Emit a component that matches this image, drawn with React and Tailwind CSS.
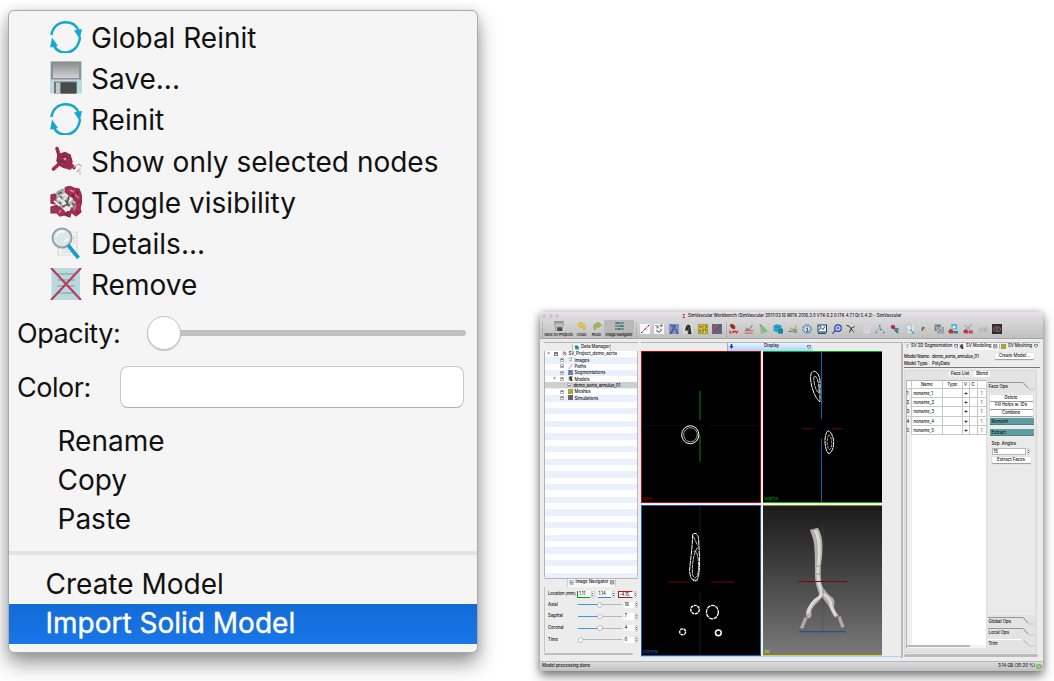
import React from "react";

/* ---------- menu icons ---------- */
function RefreshIcon() {
  return (
    <svg viewBox="0 0 32 32" className="size-8 shrink-0" fill="none" stroke="#12a8cf" strokeWidth="2.5">
      <path d="M1.500 14C2.500 6 8.500 1.300 15.500 1.300C22.500 1.300 27 5.500 28.800 10" />
      <path d="M30 16C29 26 22.500 31.500 15.500 31.500C9 31.500 4.800 28 2.500 22" />
      <path d="M24 9.500L32 8L29.800 18Z" fill="#12a8cf" stroke="none" />
      <path d="M.2 26.500L2 16.500L8 25Z" fill="#12a8cf" stroke="none" />
    </svg>
  );
}
function FloppyIcon({ className }) {
  return (
    <svg viewBox="0 0 32 32" className={className}>
      <defs>
        <linearGradient id="flp" x1="0" y1="0" x2="0" y2="1">
          <stop offset="0" stopColor="#8d8d8d" />
          <stop offset="1" stopColor="#d2d2d2" />
        </linearGradient>
      </defs>
      <rect x="0" y="0" width="32" height="32" fill="#b9dade" />
      <rect x="1" y="0" width="30" height="18" fill="#8c9292" />
      <rect x="3" y="1" width="26" height="15.500" fill="url(#flp)" />
      <rect x="4" y="20" width="23" height="12" fill="#6f7777" />
      <rect x="6" y="21" width="4" height="11" fill="#c6c9c9" />
      <rect x="11" y="21" width="15" height="11" fill="#484b4c" />
    </svg>
  );
}
function NodeIcon() {
  return (
    <svg viewBox="0 0 32 32" className="size-8 shrink-0" fill="none" strokeLinecap="round">
      <path d="M7 3.500L9 10M9 19L3.500 24M19 18L24 22.500M13 21L20 23" stroke="#a02c4f" strokeWidth="3.600" />
      <path d="M8 10L15 7.500L20 10L22 17L18 21L11 21L7 16Z" fill="#a52d50" stroke="#8b2846" strokeWidth="1.500" />
      <path d="M11 12L15 10.500L18 13M12 16L16 18M9 15L11 17" stroke="#5d3144" strokeWidth="1.400" />
      <circle cx="15" cy="14" r="1.300" fill="#d795a8" />
      <path d="M24 22L29 19L31 21M27 27L30 24M30 27V29" stroke="#c9a9b1" strokeWidth="1.200" />
    </svg>
  );
}
function NodesIcon() {
  return (
    <svg viewBox="0 0 32 32" className="size-8 shrink-0" fill="none">
      <path d="M1 9L5 8L7 14L5 18L1 17ZM15 2L19 0L24 2L29 3L31 8L32 14L26 16L21 11L16 8ZM1 21L8 19L14 25L21 26L20 31L14 29L10 30L7 27L1 27ZM24 18L32 15L30 22L31 26L26 30L20 25Z" fill="#a92f52" stroke="#8c2d49" strokeWidth="1.200" />
      <path d="M7 6L13 3L18 11L26 16L23 22L13 21L6 16Z" fill="#b9b9b9" stroke="#8a8a8a" />
      <path d="M8 13L16 17L22 13L15 8ZM15 17L16 25L22 19M4 15L10 20M16 10L13 18L20 24" stroke="#ececec" strokeWidth="1.700" />
      <path d="M10 10L12 12M15 14L18 18L12 21M19 10L17 18L20 20M22 17L26 21M5 22L8 24M8 8L12 6M9 16L11 18" stroke="#555" strokeWidth="1.500" />
      <path d="M20 4L24 6M25 9L29 12M26 19L24 24M9 27L11 24" stroke="#d77f97" strokeWidth="1.500" />
      <path d="M22 8L24 11M27 5L28 8M15 27L18 29M27 25L28 27" stroke="#5d2037" strokeWidth="1.500" />
    </svg>
  );
}
function MagnifierIcon({ className }) {
  return (
    <svg viewBox="0 0 32 32" className={className} fill="none">
      <path d="M8 5H27V28H8Z" fill="#f1f2f2" stroke="#cfcfcf" strokeWidth="1.200" strokeDasharray="2 1" />
      <path d="M12 25H22M12 22H19M24 9V17" stroke="#d0d0d0" />
      <circle cx="12" cy="11" r="9.500" fill="#d9e4e7" fillOpacity=".85" stroke="#8ea4aa" strokeWidth="2" />
      <path d="M6 10C7 6 10 4 14 5M14 15L18 12" stroke="#fff" strokeWidth="1.500" />
      <path d="M18 18L28.500 31" stroke="#169ec1" strokeWidth="3.600" />
    </svg>
  );
}
function RemoveIcon() {
  return (
    <svg viewBox="0 0 32 32" className="size-8 shrink-0" fill="none">
      <rect x="1.500" y="0" width="28.500" height="32" fill="#b8dade" />
      <path d="M7 6H25M7 12H25M7 18H25M7 25H25" stroke="#98bac0" strokeWidth="2" />
      <path d="M1 0L31 32M31 0L1 32" stroke="#bd3b5d" strokeWidth="2.200" />
    </svg>
  );
}

function MenuRow({ icon, children }) {
  return (
    <div className="flex h-[41.3px] items-center gap-[9px] pl-[41px]">
      {icon}
      <span className="pt-[2px]">{children}</span>
    </div>
  );
}

function ContextMenu() {
  return (
    <div className="mt-[10px] ml-[8px] flex h-[643px] w-[470px] shrink-0 flex-col overflow-hidden rounded-[6px] border border-[#a9a9a9] bg-[#f5f5f5] font-['Inter',sans-serif] text-[28px] leading-none whitespace-nowrap text-[#111] shadow-[0_11px_20px_rgba(0,0,0,0.38),0_2px_12px_rgba(0,0,0,0.14)]">
      <div className="flex flex-col pt-[5px]">
        <MenuRow icon={<RefreshIcon />}>Global Reinit</MenuRow>
        <MenuRow icon={<FloppyIcon className="h-[33px] w-8 shrink-0" />}>Save...</MenuRow>
        <MenuRow icon={<RefreshIcon />}>Reinit</MenuRow>
        <MenuRow icon={<NodeIcon />}>Show only selected nodes</MenuRow>
        <MenuRow icon={<NodesIcon />}>Toggle visibility</MenuRow>
        <MenuRow icon={<MagnifierIcon className="size-8 shrink-0" />}>Details...</MenuRow>
        <MenuRow icon={<RemoveIcon />}>Remove</MenuRow>
      </div>
      <div className="mt-[10px] flex h-[36px] items-center pl-[8px]">
        <span className="w-[130px] text-[27px] tracking-[-0.45px]">Opacity:</span>
        <div className="z-10 size-[34px] shrink-0 rounded-full border border-[#c3c3c3] bg-white shadow-[0_1px_1px_rgba(0,0,0,0.2)]" />
        <div className="-ml-[2px] h-[6px] w-[287px] rounded-r-full bg-[#c0c0c0]" />
      </div>
      <div className="mt-[15px] flex h-[42px] items-center pl-[8px]">
        <span className="w-[103px] text-[27px] tracking-[-0.45px]">Color:</span>
        <div className="h-[42px] w-[344px] rounded-[8px] border border-[#c9c9c9] border-b-[#b0b0b0] bg-white" />
      </div>
      <div className="mt-[14px] flex flex-col pl-[48.500px]">
        <span className="h-[39px] leading-[39px]">Rename</span>
        <span className="h-[39px] leading-[39px]">Copy</span>
        <span className="h-[39px] leading-[39px]">Paste</span>
      </div>
      <div className="mt-[12px] h-[4px] shrink-0 bg-[#e3e3e3]" />
      <div className="mt-[10px] h-[39px] shrink-0 pl-[36.500px] leading-[38px]">Create Model</div>
      <div className="h-[40px] shrink-0 bg-linear-to-b from-[#136bd6] to-[#1976e8] pl-[36.500px] leading-[38px] text-white [-webkit-text-stroke:0.4px_white]">Import Solid Model</div>
    </div>
  );
}

/* ---------- tool bar ---------- */
function Glyph({ children, w = "size-[10px]" }) {
  return (
    <svg viewBox="0 0 20 20" className={w + " shrink-0"} fill="none">
      {children}
    </svg>
  );
}
const pathGlyph = (
  <Glyph>
    <rect width="20" height="20" fill="#fafafa" />
    <path d="M3 18L8 12L14 7L18 2" stroke="#b154ae" strokeWidth="2" />
    <path d="M2 16L4 18M16 2L18 4" stroke="#111" strokeWidth="2" />
    <path d="M9 10L12 10" stroke="#d55" strokeWidth="3" />
  </Glyph>
);
const segGlyph = (
  <Glyph>
    <rect width="20" height="20" fill="#f7f7f7" />
    <path d="M3 3L8 5L6 9M11 3L17 2L14 6M5 12L8 17M12 10L15 12L11 17L8 13" stroke="#444" strokeWidth="1.600" />
    <path d="M4 7H16M8 2L14 16" stroke="#999" strokeWidth="1" strokeDasharray="2 2" />
  </Glyph>
);
const vesselGlyph = (
  <Glyph>
    <rect width="20" height="20" fill="#8090cb" />
    <path d="M5 1L9 9L3 20M8 8L14 12L17 20M9 9L13 2" stroke="#3c4d80" strokeWidth="3" />
    <path d="M7 5L10 10L15 17" stroke="#aebff0" />
  </Glyph>
);
const modelGlyph = (
  <Glyph>
    <rect width="20" height="20" fill="#d8d8d8" />
    <path d="M6 5C8 0 16 0 15 7L17 20H10L9 12L4 14Z" fill="#252525" />
    <path d="M9 4L12 11L11 18" stroke="#777" strokeWidth="1.500" />
  </Glyph>
);
const meshGlyph = (
  <Glyph>
    <rect width="20" height="20" fill="#aa9a35" />
    <path d="M2 4L7 2L11 6L17 3M1 10L6 8L12 12L19 8M3 18L8 14L14 18L18 14M7 2L6 8L8 14M13 4L12 12L14 18" stroke="#e3d660" strokeWidth="1.500" />
    <path d="M4 6L9 5M14 9L16 13M3 13L6 16M9 10L11 15M15 5L18 6" stroke="#685713" strokeWidth="1.700" />
  </Glyph>
);
const simGlyph = (
  <Glyph>
    <rect width="20" height="20" fill="#5c6680" />
    <path d="M0 12C4 9 7 1 18 1L20 4C11 6 9 18 2 20Z" fill="#a55863" />
    <path d="M3 16C9 12 10 5 18 2" stroke="#303d69" strokeWidth="2" />
  </Glyph>
);
const toolsB = [
  <Glyph key="0"><path d="M2 2L7 0L12 5L11 10L5 8Z" fill="#c62020" stroke="#222" /><path d="M2 13V18H5M8 13V18M12 13L15 18L18 13M10 18V14" stroke="#d12020" strokeWidth="2.200" /></Glyph>,
  <Glyph key="1"><path d="M1 13H19M1 18H17" stroke="#c76c76" strokeWidth="2.500" /><path d="M3 8L9 13L17 2M4 10H9" stroke="#666" strokeWidth="1.800" /></Glyph>,
  <Glyph key="2"><path d="M2 3L10 6L19 16L11 17L4 20Z" fill="#84c680" /><path d="M1 1L7 5" stroke="#b35b38" strokeWidth="2" /><path d="M9 9L13 14" stroke="#448a4f" /></Glyph>,
  <Glyph key="3"><path d="M1 3L8 0L17 3V13L9 17L1 14Z" fill="#27a7c6" /><path d="M10 10L20 9V19L11 20Z" fill="#1686a5" /><path d="M2 5L9 7L15 4" stroke="#176b83" /></Glyph>,
  <Glyph key="4"><path d="M2 17L7 8L11 13L17 3" stroke="#d9925a" strokeWidth="2.500" /><path d="M11 10H18V18H11Z" fill="#73ab74" /><path d="M1 15H10" stroke="#5a89b8" strokeWidth="2" /></Glyph>,
  <Glyph key="5"><circle cx="10" cy="10" r="8" fill="#dfeaf5" stroke="#5f83ac" strokeWidth="3" strokeDasharray="4 1.300" /><circle cx="10" cy="10" r="5.500" stroke="#7e9fc4" /><path d="M10 5V7M8 9H11V14M8 14.500H13" stroke="#2a66a8" strokeWidth="2" /></Glyph>,
  <Glyph key="6"><rect x="2" y="2" width="17" height="14" fill="#eaf3fa" stroke="#233c55" strokeWidth="2" /><path d="M4 12L8 7L12 11L16 5M2 19H18M5 5H8" stroke="#214e7c" strokeWidth="2" /></Glyph>,
  <Glyph key="7"><circle cx="12" cy="8" r="6.500" fill="#ddecff" stroke="#2c3e9e" strokeWidth="2.500" /><path d="M7 13L1 19M9 8H15M12 5V11" stroke="#2846b9" strokeWidth="2.200" /></Glyph>,
  <Glyph key="8"><path d="M1 3L6 4L10 9L7 17M10 9L17 5M10 10L15 15" stroke="#303030" strokeWidth="2" /><path d="M14 16H19" stroke="#888" strokeWidth="2" strokeDasharray="1.500 1" /></Glyph>,
  <Glyph key="9"><path d="M4 2H18V19H4Z" fill="#dedede" stroke="#c0c0c0" /><path d="M7 6H15M7 10H15M7 14H15" stroke="#b9b9b9" strokeWidth="1.500" /></Glyph>,
  <Glyph key="10"><path d="M2 16L7 9L9 3L12 10L18 16M7 9H12" stroke="#7eb4ba" strokeWidth="1.800" /><path d="M1 17H4M16 17H19M8 3H11M10 11H13" stroke="#427c87" strokeWidth="2.500" /></Glyph>,
  <Glyph key="11"><circle cx="6" cy="6" r="4.500" fill="#c63a50" /><path d="M9 7L18 9L15 17L8 14Z" fill="#348f9a" /><path d="M3 4L9 9M12 15L17 18" stroke="#7e2440" strokeWidth="2" /></Glyph>,
  <MagnifierIcon key="12" className="size-[10px] shrink-0" />,
  <Glyph key="13"><path d="M6 8C6 4 12 5 12 9L8 10V14H5V9Z" fill="#3e75a9" /><path d="M14 9C15 14 12 16 8 14L9 11H13Z" fill="#e8c83d" /></Glyph>,
  <Glyph key="14"><path d="M1 1H14V14H1Z" fill="#71828a" /><path d="M6 6H20V19H6Z" fill="#8aa6ab" /><path d="M3 4L16 17M15 5L5 15M4 10H16" stroke="#d5d5d5" strokeWidth="1.500" /><path d="M8 8L13 13" stroke="#a24865" strokeWidth="2" /></Glyph>,
  <Glyph key="15"><path d="M6 0H18L18 11H8Z" fill="#4bb4d6" /><path d="M0 15L5 9L10 13L11 19H3Z" fill="#c82c3c" /><path d="M10 14H20V19H12Z" fill="#3577a1" /><circle cx="12" cy="6" r="3" fill="#e8f6fb" /></Glyph>,
  <Glyph key="16"><path d="M3 2L16 13M17 1L5 12" stroke="#9ab0b6" strokeWidth="2.500" /><path d="M0 15L5 10L10 13L11 19H3Z" fill="#c8344b" /><path d="M11 13H20V19H12Z" fill="#c14f62" /></Glyph>,
  <Glyph key="17"><path d="M3 9V16M8 6V16M13 8V16M17 5V16" stroke="#b0b0b0" strokeWidth="3" /></Glyph>,
  <Glyph key="18"><rect width="20" height="20" fill="#302e31" /><path d="M3 13C3 5 7 4 10 7C15 4 18 7 17 13M5 14H16M10 7V12" stroke="#8f7780" strokeWidth="2" /><path d="M4 9L8 10M12 9H16" stroke="#a74051" strokeWidth="1.500" /></Glyph>,
];

function Grip() {
  return <div className="h-[15px] w-0 shrink-0 border-l border-dotted border-[#9a9a9a]" />;
}
function ToolButton({ label, icon, className }) {
  return (
    <div className={"flex h-full shrink-0 flex-col items-center justify-between pt-[1px] pb-[1.500px] text-[3.800px] leading-[5px] " + className}>
      {icon}
      <span>{label}</span>
    </div>
  );
}
function Toolbar() {
  return (
    <div className="flex h-[19px] shrink-0 items-center border-b border-[#a5a5a5] bg-linear-to-b from-[#d8d8d8] to-[#c0c0c0] pl-[2px]">
      <Grip />
      <ToolButton className="w-[31px] tracking-[-0.15px]" label="Save SV Projects" icon={<FloppyIcon className="size-[10px]" />} />
      <ToolButton className="w-[15px]" label="Undo" icon={<Glyph><path d="M1 8L8 2V5C16 5 19 10 14 18C14 13 12 11 8 11V14Z" fill="#edcb35" stroke="#b99b27" /></Glyph>} />
      <ToolButton className="w-[15px]" label="Redo" icon={<Glyph><path d="M19 8L12 2V5C4 5 1 10 6 18C6 13 8 11 12 11V14Z" fill="#a3bd48" stroke="#748b37" /></Glyph>} />
      <ToolButton className="w-[30px] bg-[#b9b9b9] tracking-[-0.2px]" label="Image Navigator" icon={<Glyph w="h-[10px] w-[11px]"><path d="M1 4H19M1 10H19M1 16H19" stroke="#35616e" strokeWidth="2" /><path d="M6 2V6M14 8V12M9 14V18" stroke="#177e9b" strokeWidth="3.500" /></Glyph>} />
      <div className="w-[2px]" />
      <Grip />
      <div className="ml-[2.500px] flex gap-[4.600px]">{[pathGlyph, segGlyph, vesselGlyph, modelGlyph, meshGlyph, simGlyph].map((g, i) => <React.Fragment key={i}>{g}</React.Fragment>)}</div>
      <div className="ml-[4px]"><Grip /></div>
      <div className="ml-[2px] flex gap-[4.600px]">{toolsB}</div>
    </div>
  );
}

/* ---------- left column ---------- */
const tree = [
  { pad: "pl-[2px]", open: true, label: "SV_Project_demo_aorta", icon: <Glyph w="size-[5px]"><circle cx="10" cy="10" r="6" stroke="#c75b66" strokeWidth="4" /><path d="M7 3L15 15" stroke="#4986c0" strokeWidth="4" /></Glyph>, dark: true },
  { pad: "pl-[8px]", label: "Images", icon: segGlyph },
  { pad: "pl-[8px]", label: "Paths", icon: pathGlyph },
  { pad: "pl-[8px]", label: "Segmentations", icon: vesselGlyph },
  { pad: "pl-[8px]", open: true, label: "Models", icon: modelGlyph },
  { pad: "pl-[15px]", label: "demo_aorta_annulus_01", sel: true },
  { pad: "pl-[8px]", label: "Meshes", icon: meshGlyph },
  { pad: "pl-[8px]", label: "Simulations", icon: simGlyph },
];
function TreeRow({ r }) {
  return (
    <div className={"flex h-[6.333px] shrink-0 items-center overflow-hidden text-[4.300px] leading-none " + r.pad + (r.sel ? " bg-[#cfcfcf] tracking-[-0.1px]" : "")}>
      <span className="w-[6.500px] shrink-0">
        {r.open && <svg viewBox="0 0 6 6" className="size-[3px]"><path d="M0 1H6L3 5Z" fill="#808080" /></svg>}
      </span>
      <span className={"flex size-[4px] shrink-0 items-center border bg-white " + (r.dark ? "border-[#777]" : "border-[#b5b5b5]")}>
        <span className="h-px w-full bg-[#777]" />
      </span>
      {r.icon && <span className="ml-[4px] flex w-[5px] shrink-0 items-center [&>svg]:size-[5px]">{r.icon}</span>}
      <span className={"pt-[1.500px] " + (r.sel ? "ml-[3px]" : "ml-[2px]")}>{r.label}</span>
    </div>
  );
}
function Close() {
  return (
    <svg viewBox="0 0 8 8" className="size-[4.500px] shrink-0" fill="none" stroke="#444">
      <path d="M1 1H7V7H1ZM2 2L6 6M6 2L2 6" />
    </svg>
  );
}
function Closed() {
  return (
    <svg viewBox="0 0 8 8" className="size-[4px] shrink-0" fill="none" stroke="#444">
      <path d="M1 1H7V4L4 7L1 4Z" strokeWidth="1.300" />
    </svg>
  );
}
function Slider({ label, value, fill }) {
  return (
    <div className="flex h-[11.700px] items-center">
      <span className="w-[30px]">{label}</span>
      <div className="flex w-[44px] items-center">
        <div className={"h-[1px] bg-[#3c94ec] " + fill} />
        <div className="z-10 -mx-[1px] size-[5.500px] shrink-0 rounded-full border border-[#bbb] bg-white" />
        <div className="h-[1px] flex-1 bg-[#b5b5b5]" />
      </div>
      <div className="ml-[2px] h-[6.500px] w-[10px] bg-white pl-[1px] leading-[6.500px]">{value}</div>
      <Stepper />
    </div>
  );
}
function Stepper() {
  return (
    <div className="ml-[1px] flex h-[7px] w-[3.500px] shrink-0 flex-col items-center justify-center gap-[1px] rounded-[1px] border border-[#d0d0d0] bg-[#f5f5f5]">
      <i className="h-[1px] w-[1px] bg-[#666]" />
      <i className="h-[1px] w-[1px] bg-[#666]" />
    </div>
  );
}
function LeftColumn() {
  return (
    <div className="flex w-[98px] shrink-0 flex-col pt-[2.500px] pl-[4px]">
      <div className="flex h-[9px] shrink-0 justify-center border-t border-[#b5b5b5] pt-[1px]">
        <div className="flex w-[39px] items-center gap-[2.500px] border-x border-[#c2c2c2] bg-[#f6f6f6] pl-[1px] text-[4.300px]">
          <Glyph w="size-[5px]"><path d="M2 3L12 1L19 7V18H6Z" fill="#178fac" /></Glyph>
          Data Manager
        </div>
      </div>
      <div className="flex h-[226px] shrink-0 flex-col border-r border-l border-r-[#b9b9b9] border-l-[#b1b1b1] bg-[repeating-linear-gradient(to_bottom,#fff_0px,#fff_6.333px,#eaf1fd_6.333px,#eaf1fd_12.667px)]">
        {tree.map((r) => <TreeRow key={r.label} r={r} />)}
      </div>
      <div className="mt-[1px] flex h-[9px] shrink-0 justify-center border-t border-[#b9b9b9]">
        <div className="flex w-[49px] items-center gap-[2px] border-x border-[#cfcfcf] bg-[#f6f6f6] pl-[1px] text-[4.200px]">
          <Glyph w="size-[5px]"><path d="M1 4H19M1 10H19M1 16H19" stroke="#35616e" strokeWidth="2" /><path d="M6 2V6M14 8V12M9 14V18" stroke="#22a0bf" strokeWidth="4" /></Glyph>
          Image Navigator
          <Close />
        </div>
      </div>
      <div className="flex h-[65px] shrink-0 flex-col border-l border-[#c4c4c4] pt-[3.500px] pl-[3px] text-[4.200px] leading-none">
        <div className="flex h-[9px] shrink-0 items-center">
          <span className="w-[29px] shrink-0 tracking-[-0.1px]">Location (mm)</span>
          <span className="h-[7px] w-[13px] shrink-0 border-b border-l border-[#00a010] bg-white pl-[1px] leading-[6px]">1.11</span>
          <Stepper />
          <span className="ml-[3px] h-[7px] w-[13px] shrink-0 border-b border-[#2986e8] bg-white pl-[1px] leading-[6px]">1.14</span>
          <Stepper />
          <span className="ml-[2.500px] h-[7px] w-[15px] shrink-0 border border-[#c01515] border-r-transparent bg-white pl-[1px] leading-[5px]">-4.15</span>
          <Stepper />
        </div>
        <div>
          <Slider label="Axial" value="16" fill="w-[20px]" />
          <Slider label="Sagittal" value="7" fill="w-[20.500px]" />
          <Slider label="Coronal" value="4" fill="w-[20.500px]" />
          <Slider label="Time" value="0" fill="w-[1px]" />
        </div>
      </div>
      <div className="mt-[1px] h-[2.500px] w-[89px] shrink-0 rounded bg-[#bdbdbd]" />
    </div>
  );
}

/* ---------- viewers ---------- */
const ring = { stroke: "#fff", strokeWidth: "1", fill: "none" };
function View({ edge, label, labelColor, bg = "bg-black", children }) {
  return (
    <div className={"grid overflow-hidden " + edge + " " + bg}>
      <svg viewBox="0 0 119 151" className="col-start-1 row-start-1 h-full w-full" preserveAspectRatio="none" fill="none">{children}</svg>
      <span className={"col-start-1 row-start-1 self-end pb-[1px] pl-[1px] text-[4px] leading-[5px] " + labelColor}>{label}</span>
    </div>
  );
}
function Display() {
  return (
    <div className="flex w-[261px] shrink-0 flex-col pt-[2.500px]">
      <div className="flex h-[9px] shrink-0 border-t border-[#b5b5b5] pl-[86px]">
        <div className="flex w-[86px] items-center border-l border-[#9ab] bg-linear-to-b from-[#e9f3fd] to-[#a9d2fb] pl-[1px] text-[4.300px]">
          <Glyph w="size-[5px]"><path d="M7 0H13V8L18 9L10 19L2 9L7 8Z" fill="#1732b8" /></Glyph>
          <span className="ml-[30px]">Display</span>
          <span className="ml-auto pr-[2px]"><Closed /></span>
        </div>
      </div>
      <div className="grid h-[305px] w-[241px] shrink-0 grid-cols-[120px_119px] grid-rows-[152.500px_151px] gap-x-[2px] gap-y-[1.500px] bg-[#f4f4f4]">
        <View edge="border border-[#a80808] border-b-[#c80000]" label="Axial" labelColor="text-[#a00000]">
          <path d="M58.500 39V68M58.500 84V110" stroke="#009a10" strokeWidth=".9" />
          <path d="M0 73.500H48M68 73.500H119" stroke="#03101b" />
          <ellipse cx="48.700" cy="83" rx="8.700" ry="9" {...ring} />
          <ellipse cx="48.900" cy="83" rx="6.800" ry="7" {...ring} strokeWidth=".9" stroke="#ccc" strokeDasharray="3 .4" />
        </View>
        <View edge="border-y border-[#00aa10]" label="Sagittal" labelColor="text-[#00900a]">
          <path d="M58.500 0V67M58.500 87V151" stroke="#1560ae" />
          <path d="M39 77H49M69 77H80" stroke="#780000" />
          <path d="M57 50C52 47 46 31 48 22C50 17 56 19 57 29Z" {...ring} strokeDasharray="5 .5" />
          <path d="M56 41C52 40 49 24 52 24C56 27 56 36 56 41" {...ring} strokeWidth=".8" strokeDasharray="4 .6" />
          <path d="M65 79C60 83 62 101 66 102C72 99 72 85 67 80Z" {...ring} strokeDasharray="5 .5" />
          <path d="M66 83C63 86 64 98 67 98C70 95 69 85 66 83" {...ring} strokeWidth=".8" strokeDasharray="3 .8" stroke="#ccc" />
        </View>
        <View edge="border border-[#1560ae]" label="Coronal" labelColor="text-[#1560ae]">
          <path d="M58.500 0V74M58.500 87V151" stroke="#052a08" />
          <path d="M26 77H49M69 77H93" stroke="#780000" />
          <path d="M51 29C54 26 57 29 57 34C58 49 59 66 56 74C53 79 48 74 48 65C49 53 51 41 51 29Z" {...ring} strokeDasharray="5 .5" />
          <path d="M52 31L56 40M56 42C52 48 50 60 51 70C54 76 57 71 57 62C57 50 55 44 52 46M51 74L56 76" {...ring} strokeWidth=".8" strokeDasharray="4 .6" />
          <circle cx="53.500" cy="105" r="4.300" {...ring} strokeWidth="1.400" strokeDasharray="3 .7" />
          <ellipse cx="71" cy="107.500" rx="6" ry="6.800" {...ring} strokeWidth="1.300" strokeDasharray="4 .7" />
          <circle cx="41" cy="127.500" r="3" {...ring} strokeWidth="1.400" strokeDasharray="3 .7" />
          <circle cx="77" cy="128.500" r="2.900" {...ring} strokeWidth="1.500" />
        </View>
        <View edge="border-y border-t-[#8b8b20] border-b-[#d9d910]" bg="bg-linear-to-b from-[#1b1b1b] to-[#7a7a7a]" label="3D" labelColor="text-[#d8d510]">
          <g strokeLinejoin="round">
            <path d="M47 24L55 22C60 31 60 40 59 52C57 65 58 70 58 76C59 82 62 86 67 91C72 94 72 98 71 101C71 105 74 109 76 111L72 113C68 108 66 101 64 99C61 95 59 92 58 93C57 97 51 99 48 107C49 110 49 114 45 114C41 110 43 104 48 99C52 95 56 93 56 89C54 83 52 78 52 70C52 57 52 50 51 38C50 31 48 28 47 24Z" fill="#b3b0ac" />
            <path d="M52 24C56 31 57 40 56 53C54 66 55 74 56 79C58 84 60 89 57 92C50 96 46 102 45 109M60 89C65 92 68 96 68 101C70 107 72 109 73 111" stroke="#dfdcd5" strokeWidth="2.700" />
            <path d="M43 113L38.500 124M76 112L80 123" stroke="#aeacaa" strokeWidth="3.300" />
            <path d="M53 61H58M53 69H57M48 25L54 23" stroke="#8b8987" strokeWidth=".8" />
          </g>
          <path d="M60 20V129" stroke="#405040" strokeOpacity=".4" />
          <path d="M35 76.500H84" stroke="#7a0808" strokeWidth="1.100" />
          <path d="M36 127.500H83" stroke="#0d4d8f" strokeWidth="1.100" />
        </View>
      </div>
      <div className="mt-[0.500px] h-[1px] shrink-0 bg-[#aed0f5]" />
    </div>
  );
}

/* ---------- right column ---------- */
function PushButton({ children, className }) {
  return <div className={"flex h-[6.300px] shrink-0 items-center justify-center rounded-[1px] bg-white leading-none shadow-[0_0.5px_1px_rgba(0,0,0,0.35)] " + className}>{children}</div>;
}
function FoldTab({ children, light }) {
  return (
    <div className="grid h-[11px] shrink-0">
      <svg viewBox="0 0 47 11" className="col-start-1 row-start-1 h-full w-full" fill="none">
        <path d="M0 .5H35" stroke={light ? "#fff" : "#969696"} />
        <path d="M35 .5L41 7H47" stroke="#c5c5c5" />
        <path d="M35 .5L40 6" stroke={light ? "#aaa" : "#757575"} strokeWidth=".7" />
      </svg>
      <span className="col-start-1 row-start-1 pt-[2px] pl-[1px] leading-[6px]">{children}</span>
    </div>
  );
}
function FaceTable() {
  const cols = "grid grid-cols-[5px_31.500px_19.500px_7px_8px_9px] shrink-0 leading-none";
  return (
    <div className="flex h-[268px] w-[80px] shrink-0 flex-col border-t border-l border-[#b5b5b5] bg-white text-[4.200px]">
      <div className={cols + " h-[7.500px] items-center border-b border-[#c8c8c8] text-center [&>span]:h-full [&>span]:border-r [&>span]:border-[#cfcfcf] [&>span]:leading-[7px]"}>
        <span /><span>Name</span><span>Type</span><span>V</span><span>C</span><span />
      </div>
      {[1, 2, 3, 4, 5].map((n) => (
        <div key={n} className={cols + " h-[9.400px] items-center border-b border-[#c8c8c8] [&>span]:h-full [&>span]:border-r [&>span]:border-[#c8c8c8] [&>span]:leading-[9px]"}>
          <span className="bg-[#f1f1f1]">{n}</span>
          <span className="pl-[2px]">noname_{n}</span>
          <span />
          <span className="flex items-center justify-center">
            <svg viewBox="0 0 8 6" className="w-[4px]"><path d="M0 3Q4 -1 8 3Q4 7 0 3Z" fill="#777" /><circle cx="4" cy="3" r="1.500" fill="#111" /></svg>
          </span>
          <span />
          <span className="text-center text-[#8b4b20]">1</span>
        </div>
      ))}
      <div className="flex-1 border-l-[5px] border-[#eee]" />
      <div className="flex h-[3.500px] shrink-0 items-center bg-[#f5f5f5]"><div className="h-[2px] w-[63px] bg-[#b9b9b9]" /></div>
    </div>
  );
}
function RightColumn() {
  return (
    <div className="flex w-[136px] shrink-0 flex-col pt-[2.500px] text-[4.300px] leading-none">
      <div className="flex h-[8.500px] shrink-0 items-center border-t border-[#b5b5b5] text-[4.200px]">
        <div className="flex w-[54px] items-center gap-[1.500px] border-r border-[#bbb] pl-[1px] [&>svg:first-child]:size-[4.500px]">{segGlyph}<span>SV 2D Segmentation</span><Closed /></div>
        <div className="flex h-full w-[41px] items-center gap-[2px] bg-[#f8f8f8] pl-[1px] [&>svg:first-child]:size-[5px]">{modelGlyph}<span>SV Modeling</span><Close /></div>
        <div className="flex w-[40px] items-center gap-[2px] border-l border-[#bbb] pl-[1px] [&>svg:first-child]:size-[5px]">{meshGlyph}<span>SV Meshing</span><Closed /></div>
      </div>
      <div className="flex h-[17.500px] shrink-0 items-start border-b border-[#777] pt-[3px]">
        <div className="flex flex-1 flex-col gap-[3.200px] pt-[2px]">
          <span className="flex tracking-[-0.1px]"><span className="w-[28px]">Model Name:</span>demo_aorta_annulus_01</span>
          <span className="flex tracking-[-0.1px]"><span className="w-[28px]">Model Type:</span>PolyData</span>
        </div>
        <PushButton className="mr-[6px] w-[39px]">Create Model...</PushButton>
      </div>
      <div className="mt-[2.500px] mr-[3px] flex h-[283px] shrink-0 flex-col border border-[#d8d8d8] bg-[#e3e3e3]">
        <div className="flex h-[9px] shrink-0 justify-center pr-[3px] text-[4.300px]">
          <div className="h-[6px] w-[26px] bg-[#ececec] pl-[3px] leading-[6px]">Face List</div>
          <div className="h-[6px] w-[16px] bg-white text-center leading-[6px]">Blend</div>
        </div>
        <div className="flex flex-1 pl-[0.500px]">
          <FaceTable />
          <div className="ml-[2px] flex w-[47px] shrink-0 flex-col pt-[1.500px]">
            <FoldTab>Face Ops</FoldTab>
            <div className="flex h-[222px] shrink-0 flex-col bg-[#eaeaea] pt-[2px] pl-[2px]">
              <PushButton className="w-[43px]">Delete</PushButton>
              <PushButton className="mt-[1.500px] w-[43px]">Fill Holes w. IDs</PushButton>
              <PushButton className="mt-[1.500px] w-[43px]">Combine</PushButton>
              <div className="mt-[2px] h-[7px] w-[44px] shrink-0 border-b border-[#4a8184] bg-[#5f9ea0] pl-[2px] leading-[7px]">Remesh</div>
              <div className="mt-[3.500px] h-[7.500px] w-[44px] shrink-0 border-b border-[#4a8184] bg-[#5f9ea0] pl-[2px] leading-[8px]">Extract</div>
              <div className="mt-[5.500px] pl-[2px]">Sep. Angles</div>
              <div className="mt-[2px] flex h-[7px] shrink-0 items-center pl-[2px]">
                <div className="h-[6.500px] w-[34px] border border-[#b8b8b8] bg-white pl-[1px] leading-[5px]">15</div>
                <Stepper />
              </div>
              <PushButton className="mt-[1.500px] ml-[2px] w-[39px]">Extract Faces</PushButton>
            </div>
            <div className="mt-[2px]">
              <FoldTab>Global Ops</FoldTab>
              <FoldTab>Local Ops</FoldTab>
              <FoldTab light>Trim</FoldTab>
            </div>
          </div>
        </div>
      </div>
      <div className="mt-[1px] h-[2.500px] w-[134px] shrink-0 rounded bg-[#bcbcbc]" />
    </div>
  );
}

function Workbench() {
  return (
    <div className="mt-[312px] ml-[62px] flex h-[359px] w-[503px] shrink-0 flex-col overflow-hidden rounded-t-[2px] rounded-b-[2px] bg-[#ececec] font-['Inter',sans-serif] text-[4.300px] font-medium whitespace-nowrap text-[#111] shadow-[0_5px_11px_rgba(0,0,0,0.5),0_0_6px_rgba(0,0,0,0.2)]">
      <div className="flex h-[8px] shrink-0 items-center bg-linear-to-b from-[#e6e4e6] to-[#d6d4d6] pl-[2px]">
        <div className="flex gap-[2.500px]">
          <i className="size-[4px] rounded-full bg-[#c9c7c9]" />
          <i className="size-[4px] rounded-full bg-[#c9c7c9]" />
          <i className="size-[4px] rounded-full bg-[#c9c7c9]" />
        </div>
        <div className="ml-[123px] flex items-center gap-[2px] text-[4.200px] leading-none">
          <Glyph w="size-[4px]"><rect width="20" height="20" fill="#eee" /><path d="M3 3H14L4 18H17" stroke="#b73648" strokeWidth="5" /></Glyph>
          <span className="pt-[1px]">SimVascular Workbench (SimVascular 2017.03.16 MITK 2016.3.0 VTK 6.2.0 ITK 4.7.1 Qt 5.4.2) - SimVascular</span>
        </div>
      </div>
      <Toolbar />
      <div className="flex h-[322px] shrink-0">
        <LeftColumn />
        <div className="w-[3px] shrink-0" />
        <Display />
        <div className="mt-[3px] mr-[1.500px] -ml-[1px] h-[316px] w-[1.500px] shrink-0 bg-[#bcbcbc]" />
        <RightColumn />
      </div>
      <div className="flex flex-1 items-center justify-between border-t border-[#b8b8b8] bg-linear-to-b from-[#dcdcdc] to-[#c0c0c0] pr-[1.500px] pl-[2px]">
        <span>Model processing done</span>
        <span className="flex items-center gap-[1px]">3.14 GB (30.20 %)<i className="size-[5.500px] rounded-full border border-[#68a85b] bg-[#83df68]" /></span>
      </div>
    </div>
  );
}

export default function App() {
  return (
    <div className="flex h-[681px] w-[1054px] items-start overflow-hidden bg-white">
      <ContextMenu />
      <Workbench />
    </div>
  );
}
